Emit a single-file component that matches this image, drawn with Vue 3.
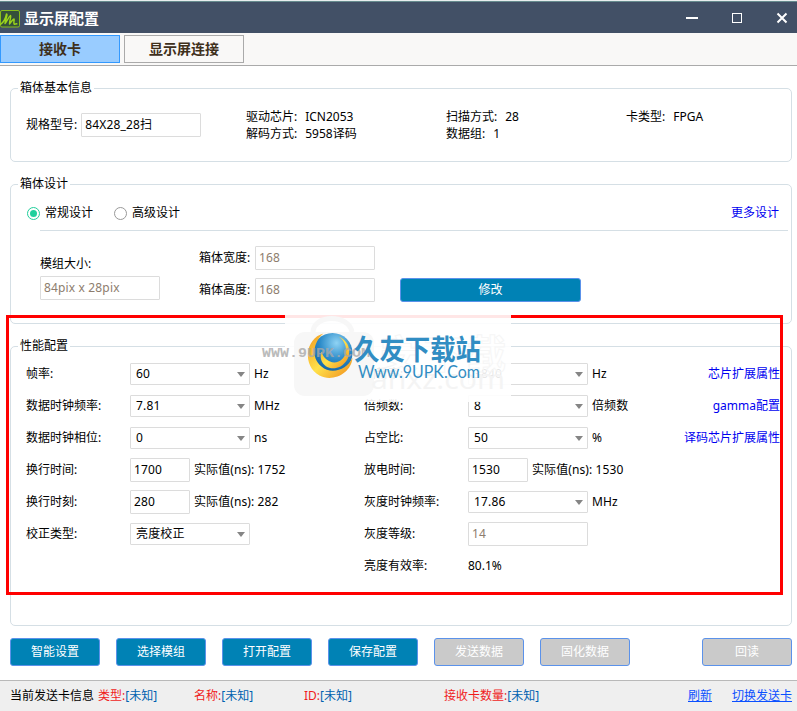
<script setup>
import { ref } from 'vue'

const design = ref('normal')
const tabs = ['接收卡', '显示屏连接']
const activeTab = ref(0)

const info = [
  [['驱动芯片:', 'ICN2053'], ['解码方式:', '5958译码']],
  [['扫描方式:', '28'], ['数据组:', '1']],
  [['卡类型:', 'FPGA']],
]

const left = [
  { label: '帧率:', type: 'select', value: '60', unit: 'Hz' },
  { label: '数据时钟频率:', type: 'select', value: '7.81', unit: 'MHz' },
  { label: '数据时钟相位:', type: 'select', value: '0', unit: 'ns' },
  { label: '换行时间:', type: 'short', value: '1700', unit: '实际值(ns): 1752' },
  { label: '换行时刻:', type: 'short', value: '280', unit: '实际值(ns): 282' },
  { label: '校正类型:', type: 'select', value: '亮度校正' },
]
const right = [
  { label: '刷新率:', type: 'select', value: '3840', unit: 'Hz' },
  { label: '倍频数:', type: 'select', value: '8', unit: '倍频数' },
  { label: '占空比:', type: 'select', value: '50', unit: '%' },
  { label: '放电时间:', type: 'short', value: '1530', unit: '实际值(ns): 1530' },
  { label: '灰度时钟频率:', type: 'select', value: '17.86', unit: 'MHz' },
  { label: '灰度等级:', type: 'readonly', value: '14' },
  { label: '亮度有效率:', type: 'text', value: '80.1%' },
]
const links = ['芯片扩展属性', 'gamma配置', '译码芯片扩展属性']

const actions = [
  { text: '智能设置' },
  { text: '选择模组' },
  { text: '打开配置' },
  { text: '保存配置' },
  { text: '发送数据', disabled: true },
  { text: '固化数据', disabled: true },
  { text: '回读', disabled: true, last: true },
]
</script>

<template>
  <div class="window">
    <header class="titlebar">
      <svg class="logo" width="20" height="18" viewBox="0 0 20 18">
        <rect x="0.500" y="0.500" width="19" height="16.500" rx="1.500" fill="#34503a" stroke="#86bd1c" />
        <path d="M0.500 14.500C4 12 6 6.500 6.500 4C8 4 5.500 9.500 5 13.500C7 11.500 8.500 7 10.500 5.500C11.500 6.500 9.500 10 9.500 14C11 12 12.500 9.500 14 9C14.800 10 13 12.500 14.300 14.300L16.800 13.800" fill="none" stroke="#9bd31c" stroke-width="1.400" stroke-linecap="round" stroke-linejoin="round" />
      </svg>
      <h1 class="title">显示屏配置</h1>
      <svg class="controls" width="106" height="14" viewBox="0 0 106 14">
        <path d="M0 7H12" stroke="#fff" stroke-width="2" />
        <rect x="46.500" y="2.500" width="9" height="9" fill="none" stroke="#fff" />
        <path d="M91.500 2.500L100.500 11.500M100.500 2.500L91.500 11.500" stroke="#fff" stroke-width="2" />
      </svg>
    </header>

    <nav class="tabs">
      <button
        v-for="(t, i) in tabs"
        :key="t"
        class="tab"
        :class="{ active: i === activeTab }"
        @click="activeTab = i"
      >{{ t }}</button>
    </nav>

    <main class="content">
      <section class="group basic">
        <h2 class="legend">箱体基本信息</h2>
        <div class="spec">
          <span>规格型号:</span>
          <input class="field" value="84X28_28扫" />
        </div>
        <dl v-for="(col, i) in info" :key="i" class="info">
          <div v-for="row in col" :key="row[0]" class="info-row">
            <dt>{{ row[0] }}</dt>
            <dd>{{ row[1] }}</dd>
          </div>
        </dl>
      </section>

      <section class="group cabinet">
        <h2 class="legend">箱体设计</h2>
        <div class="modes">
          <label class="mode" @click="design = 'normal'">
            <span class="radio" :class="{ on: design === 'normal' }"></span>常规设计
          </label>
          <label class="mode" @click="design = 'advanced'">
            <span class="radio" :class="{ on: design === 'advanced' }"></span>高级设计
          </label>
          <a class="link">更多设计</a>
        </div>
        <div class="dims">
          <div class="module">
            <span>模组大小:</span>
            <input class="field muted" value="84pix x 28pix" readonly />
          </div>
          <div class="sizes">
            <div class="size"><span>箱体宽度:</span><input class="field muted" value="168" readonly /></div>
            <div class="size"><span>箱体高度:</span><input class="field muted" value="168" readonly /></div>
          </div>
          <button class="btn modify">修改</button>
        </div>
      </section>

      <section class="group perf">
        <h2 class="legend">性能配置</h2>
        <div v-for="(rows, c) in [left, right]" :key="c" class="column">
          <div v-for="r in rows" :key="r.label" class="row">
            <span class="label">{{ r.label }}</span>
            <div v-if="r.type === 'select'" class="select">
              <span>{{ r.value }}</span><i class="arrow"></i>
            </div>
            <span v-else-if="r.type === 'text'" class="num">{{ r.value }}</span>
            <input
              v-else
              class="field"
              :class="{ short: r.type === 'short', muted: r.type === 'readonly' }"
              :value="r.value"
            />
            <span v-if="r.unit" class="unit">{{ r.unit }}</span>
          </div>
        </div>
        <div class="links">
          <a v-for="l in links" :key="l" class="link">{{ l }}</a>
        </div>
      </section>
    </main>

    <div class="actions">
      <button
        v-for="a in actions"
        :key="a.text"
        class="btn"
        :class="{ disabled: a.disabled, last: a.last }"
      >{{ a.text }}</button>
    </div>

    <footer class="status">
      <span>当前发送卡信息</span>
      <span><b>类型:</b><em>[未知]</em></span>
      <span><b>名称:</b><em>[未知]</em></span>
      <span><b>ID:</b><em>[未知]</em></span>
      <span><b>接收卡数量:</b><em>[未知]</em></span>
      <a>刷新</a>
      <a>切换发送卡</a>
    </footer>

    <div class="highlight"></div>
    <div class="stamp">
      <svg width="252" height="90" viewBox="0 0 252 90">
        <defs>
          <radialGradient id="globe" cx="0.6" cy="0.25" r="0.8">
            <stop offset="0" stop-color="#8fd3f4" />
            <stop offset="0.5" stop-color="#2f8dca" />
            <stop offset="1" stop-color="#0d5c9f" />
          </radialGradient>
          <linearGradient id="gold" x1="0" y1="0" x2="1" y2="1">
            <stop offset="0" stop-color="#f39a1f" />
            <stop offset="0.5" stop-color="#ffe14a" />
            <stop offset="1" stop-color="#f08c1c" />
          </linearGradient>
        </defs>
        <rect x="26" y="0" width="226" height="87" fill="#fff" fill-opacity="0.9" />
        <rect x="35" y="17" width="80" height="64" rx="11" fill="#f7f7f7" />
        <path d="M54 17C55 -1 90 -1 93 17" fill="none" stroke="#f7f7f7" stroke-width="5" />
        <text x="121" y="53" class="ghost-cn" textLength="126">安下载</text>
        <text x="112" y="74" class="ghost" textLength="134" lengthAdjust="spacingAndGlyphs">anxz.com</text>
        <g transform="translate(0.500 0.500)">
          <circle cx="73" cy="37.500" r="20" fill="url(#globe)" />
          <path d="M64 18C45 23 43 51 60 60C73 67 92 58 93 42C88 54 72 60 62 51C51 42 54 26 64 18Z" fill="url(#gold)" />
          <path d="M79 21C89 27 89 42 79 46C72 49 64 44 62 36C58 47 69 57 81 51C94 43 92 26 79 21Z" fill="url(#gold)" />
        </g>
        <text x="3" y="42" class="gray" textLength="108" lengthAdjust="spacingAndGlyphs">WWW.9UPK.COM</text>
        <text x="95" y="45" class="brand" textLength="127" lengthAdjust="spacingAndGlyphs">久友下载站</text>
        <text x="99" y="63" class="site" textLength="122" lengthAdjust="spacingAndGlyphs">Www.9UPK.Com</text>
      </svg>
    </div>
  </div>
</template>

<style>
body {
  margin: 0;
  background: #fff;
}
</style>

<style scoped>
* {
  box-sizing: border-box;
}
.window {
  position: relative;
  display: flex;
  flex-direction: column;
  width: 797px;
  height: 711px;
  overflow: hidden;
  background: #fff;
  color: #000;
  font: 12px/16px "Noto Sans", "Noto Sans CJK SC", sans-serif;
  white-space: nowrap;
}
button,
input {
  font: inherit;
  color: inherit;
}
h1,
h2,
dl,
dd {
  margin: 0;
}
.titlebar {
  display: flex;
  align-items: center;
  height: 33px;
  padding: 3px 9px 0 0;
  border-top: 1px solid #e8eeee;
  background: #425066;
  box-shadow: inset 0 1px #668b8e;
}
.logo {
  flex: none;
}
.title {
  margin: -2px 0 0 4px;
  color: #fff;
  font-size: 15px;
  font-weight: 700;
  line-height: 20px;
}
.controls {
  margin: -2px -4px 0 auto;
}
.tabs {
  display: flex;
  gap: 4px;
  height: 33px;
  padding-top: 2px;
  border-bottom: 1px solid #aaa;
  background: #f9f8f7;
}
.tab {
  width: 120px;
  height: 28px;
  padding: 0;
  border: 1px solid #aaa;
  background: #f9f8f7;
  color: #3f301c;
  font-size: 14px;
  font-weight: 700;
  line-height: 26px;
}
.tab.active {
  border-color: #3399ff;
  background: #99ccff;
}
.content {
  display: flex;
  flex-direction: column;
  gap: 22px;
  padding: 22px 5px 0 10px;
}
.group {
  position: relative;
  display: flex;
  border: 1px solid #d5dfe5;
  border-radius: 5px;
}
.legend {
  position: absolute;
  top: -9px;
  left: 7px;
  padding: 0 2px;
  background: #fff;
  font-size: 12px;
  font-weight: 400;
  line-height: 16px;
}
.field {
  flex: none;
  width: 120px;
  height: 24px;
  padding: 0 3px 2px;
  border: 1px solid #dcdcdc;
  border-radius: 1px;
  outline: none;
  background: #fff;
  letter-spacing: 0.15px;
}
.field.short {
  width: 60px;
}
.field.muted {
  color: #8d7d6e;
}
.basic {
  height: 74px;
}
.spec {
  display: flex;
  align-items: center;
  gap: 4px;
  width: 220px;
  height: 24px;
  margin: 24px 0 0 15px;
}
.info {
  width: 200px;
  margin-top: 20px;
}
.info + .info + .info {
  width: 130px;
  margin-left: -20px;
}
.info-row {
  display: flex;
  gap: 8px;
  height: 17px;
}
.cabinet {
  flex-direction: column;
  height: 140px;
}
.modes {
  display: flex;
  align-items: center;
  height: 16px;
  margin: 20px 12px 0 16px;
}
.mode {
  display: flex;
  align-items: center;
  gap: 5px;
  width: 87px;
}
.radio {
  display: grid;
  place-items: center;
  width: 13px;
  height: 13px;
  border: 1px solid #999;
  border-radius: 50%;
}
.radio.on {
  border-color: #1fce9b;
}
.radio.on::after {
  content: "";
  width: 7px;
  height: 7px;
  border-radius: 50%;
  background: #1fd09d;
}
.link {
  color: #0000f0;
}
.modes .link {
  margin-left: auto;
}
.dims {
  display: flex;
  margin: 9px 3px 0 29px;
  padding-top: 15px;
  border-top: 1px solid #d5dfe5;
}
.module {
  display: flex;
  flex-direction: column;
  gap: 4px;
  width: 159px;
  padding-top: 10px;
}
.sizes {
  display: flex;
  flex-direction: column;
  gap: 8px;
}
.size {
  display: flex;
  align-items: center;
  justify-content: space-between;
  width: 176px;
}
.btn {
  width: 90px;
  height: 28px;
  padding: 0;
  border: 1px solid #5b92ea;
  border-radius: 3px;
  background: #0082b5;
  color: #fff;
}
.btn.modify {
  align-self: flex-end;
  width: 181px;
  height: 24px;
  margin-left: 25px;
}
.btn.disabled {
  background: #cacaca;
}
.perf {
  height: 280px;
  padding: 11px 0 0 15px;
}
.column {
  flex: none;
  width: 338px;
}
.column + .column {
  width: 300px;
}
.row {
  display: flex;
  align-items: center;
  height: 32px;
}
.label {
  flex: none;
  width: 104px;
}
.select {
  display: flex;
  align-items: center;
  justify-content: space-between;
  width: 120px;
  height: 22px;
  padding: 0 4px 0 5px;
  border: 1px solid #dcdcdc;
  border-radius: 1px;
  letter-spacing: 0.15px;
}
.arrow {
  border: 4px solid transparent;
  border-top: 5px solid #858585;
  border-bottom: 0;
}
.unit {
  margin-left: 4px;
  letter-spacing: 0.1px;
}
.links {
  display: flex;
  flex: 1;
  flex-direction: column;
  align-items: flex-end;
  padding-right: 11px;
  line-height: 32px;
}
.actions {
  display: flex;
  gap: 16px;
  padding: 12px 5px 14px 10px;
}
.actions .last {
  margin-left: auto;
}
.status {
  display: grid;
  grid-template-columns: 88px 96px 110px 140px 244px 44px auto;
  align-items: center;
  height: 31px;
  padding-left: 10px;
  border-top: 1px solid #b9b9b9;
  background: #efefef;
}
.status b {
  color: #f01c1c;
  font-weight: 400;
}
.status em {
  color: #0061b0;
  font-style: normal;
}
.status a {
  color: #0a50ff;
  text-decoration: underline;
}
.highlight {
  position: absolute;
  top: 315px;
  left: 6px;
  width: 777px;
  height: 280px;
  border: 3px solid #f00;
  pointer-events: none;
}
.stamp {
  position: absolute;
  top: 315px;
  left: 259px;
  height: 90px;
  pointer-events: none;
}
.ghost-cn {
  fill: none;
  stroke: #f6f6f6;
  font: 700 39px "Noto Sans CJK SC", sans-serif;
}
.ghost {
  fill: #f4f4f4;
  font: 400 28px "Open Sans", sans-serif;
}
.gray {
  fill: #a8a8a8;
  fill-opacity: 0.8;
  font: 700 13px "Liberation Mono", monospace;
}
.brand {
  fill: #318dc3;
  font: 700 28px "Noto Sans CJK SC", sans-serif;
}
.site {
  fill: #318dc3;
  font: 400 17px Lato, sans-serif;
}
</style>
